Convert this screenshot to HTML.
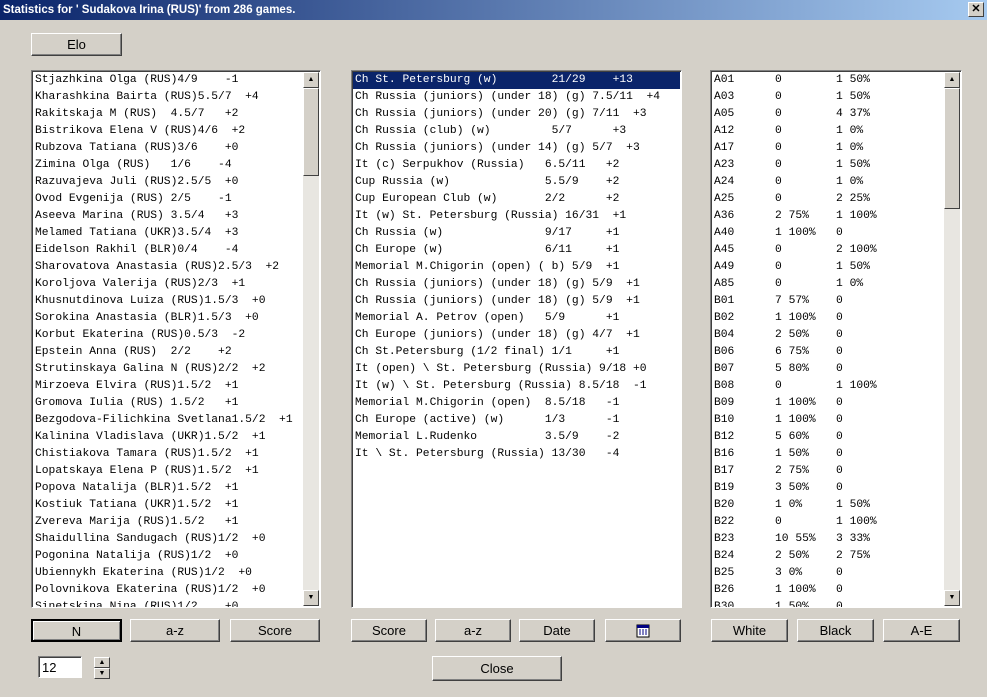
<!DOCTYPE html>
<html><head><style>
body{margin:0;width:987px;height:697px;background:#d4d0c8;position:relative;overflow:hidden;font-family:"Liberation Sans",sans-serif}
.title{position:absolute;left:0;top:0;width:987px;height:20px;background:linear-gradient(90deg,#0a246a,#a6caf0);color:#fff;font-weight:bold;font-size:11.5px;line-height:20px}
.title span{padding-left:3px}
.xb{position:absolute;right:3px;top:2px;width:14px;height:13px;background:#d4d0c8;border:1px solid;border-color:#fff #404040 #404040 #fff;color:#000;font-size:11px;line-height:12px;text-align:center}
.btn{position:absolute;height:23px;background:#d4d0c8;border:1px solid;border-color:#fff #404040 #404040 #fff;box-shadow:inset -1px -1px #808080;box-sizing:border-box;text-align:center;font-size:13px;line-height:21px;color:#000}
.btn.def{border:2px solid #000;box-shadow:inset 1px 1px #fff,inset -1px -1px #808080}
.box{position:absolute;background:#fff;border:1px solid;border-color:#808080 #fff #fff #808080;box-shadow:inset 1px 1px #404040;overflow:hidden}
pre{margin:0;padding:0 0 0 2px;font-family:"Liberation Mono",monospace;font-size:11.3px;line-height:17px;color:#000;position:absolute;left:1px;top:1px}
.sb{position:absolute;top:1px;bottom:1px;right:1px;width:16px;background:#e8e6e1}
.ar{position:absolute;left:0;width:16px;height:16px;background:#d4d0c8;box-sizing:border-box;border:1px solid;border-color:#fff #404040 #404040 #fff;font-size:7px;line-height:14px;text-align:center}
.th{position:absolute;left:0;width:16px;background:#d4d0c8;box-sizing:border-box;border:1px solid;border-color:#fff #404040 #404040 #fff}
.sel{position:absolute;left:1px;right:1px;top:1px;height:17px;background:#0a246a}
</style></head><body>
<div class="title"><span>Statistics for ' Sudakova Irina (RUS)' from 286 games.</span><div class="xb">✕</div></div>
<div class="btn" style="left:31px;top:33px;width:91px">Elo</div>

<div class="box" style="left:31px;top:70px;width:288px;height:536px">
<pre>Stjazhkina Olga (RUS)4/9    -1
Kharashkina Bairta (RUS)5.5/7  +4
Rakitskaja M (RUS)  4.5/7   +2
Bistrikova Elena V (RUS)4/6  +2
Rubzova Tatiana (RUS)3/6    +0
Zimina Olga (RUS)   1/6    -4
Razuvajeva Juli (RUS)2.5/5  +0
Ovod Evgenija (RUS) 2/5    -1
Aseeva Marina (RUS) 3.5/4   +3
Melamed Tatiana (UKR)3.5/4  +3
Eidelson Rakhil (BLR)0/4    -4
Sharovatova Anastasia (RUS)2.5/3  +2
Koroljova Valerija (RUS)2/3  +1
Khusnutdinova Luiza (RUS)1.5/3  +0
Sorokina Anastasia (BLR)1.5/3  +0
Korbut Ekaterina (RUS)0.5/3  -2
Epstein Anna (RUS)  2/2    +2
Strutinskaya Galina N (RUS)2/2  +2
Mirzoeva Elvira (RUS)1.5/2  +1
Gromova Iulia (RUS) 1.5/2   +1
Bezgodova-Filichkina Svetlana1.5/2  +1
Kalinina Vladislava (UKR)1.5/2  +1
Chistiakova Tamara (RUS)1.5/2  +1
Lopatskaya Elena P (RUS)1.5/2  +1
Popova Natalija (BLR)1.5/2  +1
Kostiuk Tatiana (UKR)1.5/2  +1
Zvereva Marija (RUS)1.5/2   +1
Shaidullina Sandugach (RUS)1/2  +0
Pogonina Natalija (RUS)1/2  +0
Ubiennykh Ekaterina (RUS)1/2  +0
Polovnikova Ekaterina (RUS)1/2  +0
Sinetskina Nina (RUS)1/2    +0</pre>
<div class="sb"><div class="ar" style="top:0">▲</div><div class="th" style="top:16px;height:88px"></div><div class="ar" style="bottom:0">▼</div></div>
</div>

<div class="box" style="left:351px;top:70px;width:329px;height:536px">
<div class="sel"></div>
<pre><span style="color:#fff">Ch St. Petersburg (w)        21/29    +13</span>
Ch Russia (juniors) (under 18) (g) 7.5/11  +4
Ch Russia (juniors) (under 20) (g) 7/11  +3
Ch Russia (club) (w)         5/7      +3
Ch Russia (juniors) (under 14) (g) 5/7  +3
It (c) Serpukhov (Russia)   6.5/11   +2
Cup Russia (w)              5.5/9    +2
Cup European Club (w)       2/2      +2
It (w) St. Petersburg (Russia) 16/31  +1
Ch Russia (w)               9/17     +1
Ch Europe (w)               6/11     +1
Memorial M.Chigorin (open) ( b) 5/9  +1
Ch Russia (juniors) (under 18) (g) 5/9  +1
Ch Russia (juniors) (under 18) (g) 5/9  +1
Memorial A. Petrov (open)   5/9      +1
Ch Europe (juniors) (under 18) (g) 4/7  +1
Ch St.Petersburg (1/2 final) 1/1     +1
It (open) \ St. Petersburg (Russia) 9/18 +0
It (w) \ St. Petersburg (Russia) 8.5/18  -1
Memorial M.Chigorin (open)  8.5/18   -1
Ch Europe (active) (w)      1/3      -1
Memorial L.Rudenko          3.5/9    -2
It \ St. Petersburg (Russia) 13/30   -4</pre>
</div>

<div class="box" style="left:710px;top:70px;width:250px;height:536px">
<pre>A01      0        1 50%
A03      0        1 50%
A05      0        4 37%
A12      0        1 0%
A17      0        1 0%
A23      0        1 50%
A24      0        1 0%
A25      0        2 25%
A36      2 75%    1 100%
A40      1 100%   0
A45      0        2 100%
A49      0        1 50%
A85      0        1 0%
B01      7 57%    0
B02      1 100%   0
B04      2 50%    0
B06      6 75%    0
B07      5 80%    0
B08      0        1 100%
B09      1 100%   0
B10      1 100%   0
B12      5 60%    0
B16      1 50%    0
B17      2 75%    0
B19      3 50%    0
B20      1 0%     1 50%
B22      0        1 100%
B23      10 55%   3 33%
B24      2 50%    2 75%
B25      3 0%     0
B26      1 100%   0
B30      1 50%    0</pre>
<div class="sb"><div class="ar" style="top:0">▲</div><div class="th" style="top:16px;height:121px"></div><div class="ar" style="bottom:0">▼</div></div>
</div>

<div class="btn def" style="left:31px;top:619px;width:91px">N</div>
<div class="btn" style="left:130px;top:619px;width:90px">a-z</div>
<div class="btn" style="left:230px;top:619px;width:90px">Score</div>
<div class="btn" style="left:351px;top:619px;width:76px">Score</div>
<div class="btn" style="left:435px;top:619px;width:76px">a-z</div>
<div class="btn" style="left:519px;top:619px;width:76px">Date</div>
<div class="btn" style="left:605px;top:619px;width:76px"><svg width="14" height="14" viewBox="0 0 14 14" style="margin-top:4px"><rect x="1" y="1" width="12" height="12" fill="#fff" stroke="#000"/><rect x="1" y="1" width="12" height="3" fill="#000080"/><path d="M3 6h2M6 6h2M9 6h2M3 8h2M6 8h2M9 8h2M3 10h2M6 10h2M9 10h2" stroke="#000080"/></svg></div>
<div class="btn" style="left:711px;top:619px;width:77px">White</div>
<div class="btn" style="left:797px;top:619px;width:77px">Black</div>
<div class="btn" style="left:883px;top:619px;width:77px">A-E</div>

<div style="position:absolute;left:38px;top:656px;width:44px;height:22px;background:#fff;border:1px solid;border-color:#808080 #fff #fff #808080;box-shadow:inset 1px 1px #404040;font-size:13px;line-height:22px;padding-left:3px;box-sizing:border-box">12</div>
<div class="ar" style="position:absolute;left:94px;top:657px;width:16px;height:11px;line-height:9px">▲</div>
<div class="ar" style="position:absolute;left:94px;top:668px;width:16px;height:11px;line-height:9px">▼</div>

<div class="btn" style="left:432px;top:656px;width:130px;height:25px;line-height:23px">Close</div>
</body></html>
